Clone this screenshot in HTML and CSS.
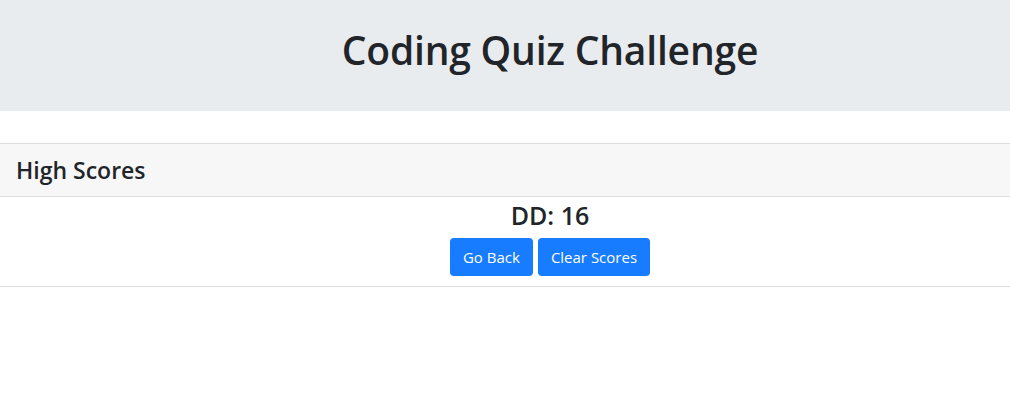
FILE: index.html
```html
<!DOCTYPE html>
<html lang="en">
<head>
<meta charset="utf-8">
<title>Coding Quiz Challenge</title>
<link rel="stylesheet" href="styles.css">
</head>
<body>
<header class="jumbotron">
  <h1 class="title">Coding Quiz Challenge</h1>
</header>
<section class="card">
  <div class="card-header">
    <h4 class="card-title">High Scores</h4>
  </div>
  <div class="card-body">
    <h4 class="score">DD: 16</h4>
    <div class="actions">
      <button class="btn">Go Back</button>
      <button class="btn">Clear Scores</button>
    </div>
  </div>
</section>
</body>
</html>
```

FILE: styles.css
```css
* { box-sizing: border-box; }
body {
  margin: 0;
  font-family: "Open Sans", "Noto Sans", Arial, sans-serif;
  color: #212529;
  background: #fff;
}
.jumbotron {
  background: #e9ecef;
  height: 111px;
  display: flex;
  align-items: center;
  justify-content: center;
  padding-left: 90px;
  padding-bottom: 10px;
  margin-bottom: 32px;
}
.title {
  margin: 0;
  font-size: 39px;
  font-weight: 600;
  line-height: 1.2;
  letter-spacing: -0.2px;
}
.card {
  border-top: 1px solid #dcdcdc;
  border-bottom: 1px solid #dcdcdc;
}
.card-header {
  background: #f7f7f7;
  border-bottom: 1px solid #dcdcdc;
  height: 53px;
  display: flex;
  align-items: center;
  padding: 0 16px;
}
.card-title {
  margin: 0;
  font-size: 23px;
  font-weight: 600;
  letter-spacing: 0;
}
.card-body {
  display: flex;
  flex-direction: column;
  align-items: center;
  padding: 2px 0 10px 90px;
}
.score {
  margin: 0 0 7px;
  font-size: 25px;
  font-weight: 600;
  line-height: 32px;
}
.actions {
  display: flex;
  gap: 5px;
}
.btn {
  font-family: inherit;
  font-size: 15px;
  color: #fff;
  background: #177cff;
  border: 0;
  border-radius: 4px;
  height: 38px;
  padding: 0 13px;
}
```
